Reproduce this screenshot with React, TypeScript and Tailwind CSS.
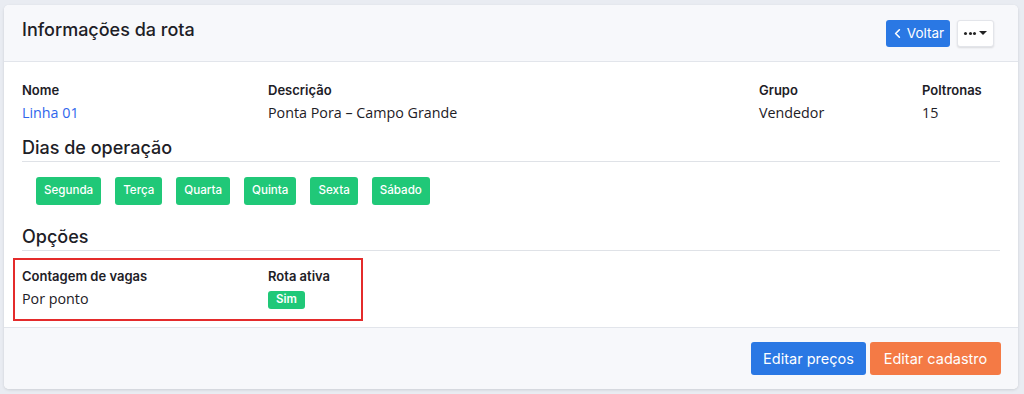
import { ChevronLeft } from "lucide-react"

const days = ["Segunda", "Terça", "Quarta", "Quinta", "Sexta", "Sábado"]

const head = "font-['Inter','Liberation_Sans',sans-serif]"
const body = "font-['Open_Sans','Liberation_Sans',sans-serif]"

export default function App() {
  return (
    <div className="h-[394px] w-full bg-[#e9ecf2] pl-[4px] pr-[6px] pt-[5px]">
      <section className="flex h-[384px] flex-col overflow-hidden rounded-[5px] bg-white shadow-[0_1px_3px_rgba(0,0,0,0.12)]">
        <header className="flex h-[57px] shrink-0 items-center justify-between border-b border-[#e2e5eb] bg-[#f7f8fb] pl-[18px] pr-[24px]">
          <h1 className={`${head} -mt-[7px] text-[18px] font-medium text-[#1d2026]`}>
            Informações da rota
          </h1>
          <div className="flex items-center gap-[7px]">
            <button
              className={`${head} flex h-[27px] w-[64px] items-center justify-center gap-[2px] rounded-[3px] bg-[#2a78e4] text-[13.5px] text-white`}
            >
              <ChevronLeft size={15} strokeWidth={2.6} className="-ml-[2px]" />
              Voltar
            </button>
            <button className="flex h-[27px] w-[37px] items-center justify-center gap-[3px] rounded-[3px] border border-[#e3e5ea] bg-white shadow-[0_1px_2px_rgba(0,0,0,0.12)]">
              <span className="flex gap-[1.5px]">
                <span className="h-[3px] w-[3px] rounded-full bg-[#222]" />
                <span className="h-[3px] w-[3px] rounded-full bg-[#222]" />
                <span className="h-[3px] w-[3px] rounded-full bg-[#222]" />
              </span>
              <span className="h-0 w-0 border-x-[4px] border-t-[4px] border-x-transparent border-t-[#222]" />
            </button>
          </div>
        </header>

        <div className="flex-1 px-[18px] pt-[18px]">
          <div className="grid grid-cols-[246px_491px_163px_1fr]">
            <Field label="Nome" value="Linha 01" link />
            <Field label="Descrição" value="Ponta Pora – Campo Grande" />
            <Field label="Grupo" value="Vendedor" />
            <Field label="Poltronas" value="15" />
          </div>

          <SectionTitle className="mt-[10px]">Dias de operação</SectionTitle>

          <div className="ml-[14px] mt-[15px] flex gap-[14px]">
            {days.map((day) => (
              <span
                key={day}
                className={`${head} flex h-[28px] shrink-0 items-center rounded-[3px] bg-[#20c878] px-[8px] text-[11.6px] font-medium leading-none text-white`}
              >
                {day}
              </span>
            ))}
          </div>

          <SectionTitle className="mt-[19px]">Opções</SectionTitle>

          <div className="-ml-[9px] mt-[7px] grid h-[63px] w-[350px] grid-cols-[246px_1fr] border-2 border-[#e42b2b] pl-[7px] pt-[6px]">
            <Field label="Contagem de vagas" value="Por ponto" />
            <div>
              <p className={`${head} text-[13px] font-semibold leading-[20px] text-[#1d2026]`}>
                Rota ativa
              </p>
              <div className="flex h-[25px] items-center">
                <span
                  className={`${head} mt-[2px] flex h-[18px] items-center rounded-[3px] bg-[#20c878] px-[8px] text-[11.5px] font-semibold leading-none text-white`}
                >
                  Sim
                </span>
              </div>
            </div>
          </div>
        </div>

        <footer className="flex h-[62px] shrink-0 items-center justify-end gap-[4px] border-t border-[#e2e5eb] bg-[#f7f8fb] pr-[17px]">
          <button
            className={`${head} h-[33px] w-[115px] rounded-[3px] bg-[#2a78e4] text-[14.5px] text-white`}
          >
            Editar preços
          </button>
          <button
            className={`${head} h-[33px] w-[131px] rounded-[3px] bg-[#f47a45] text-[14.5px] text-white`}
          >
            Editar cadastro
          </button>
        </footer>
      </section>
    </div>
  )
}

function Field({
  label,
  value,
  link = false,
}: {
  label: string
  value: string
  link?: boolean
}) {
  return (
    <div>
      <p className={`${head} text-[13px] font-semibold leading-[20px] text-[#1d2026]`}>
        {label}
      </p>
      <p
        className={`${body} text-[14.3px] leading-[25px] ${
          link ? "text-[#2f66ec]" : "text-[#1d2026]"
        }`}
      >
        {value}
      </p>
    </div>
  )
}

function SectionTitle({
  children,
  className = "",
}: {
  children: React.ReactNode
  className?: string
}) {
  return (
    <h2
      className={`${head} border-b border-[#dfe2e7] text-[18px] font-medium leading-[26px] text-[#1d2026] ${className}`}
    >
      {children}
    </h2>
  )
}
